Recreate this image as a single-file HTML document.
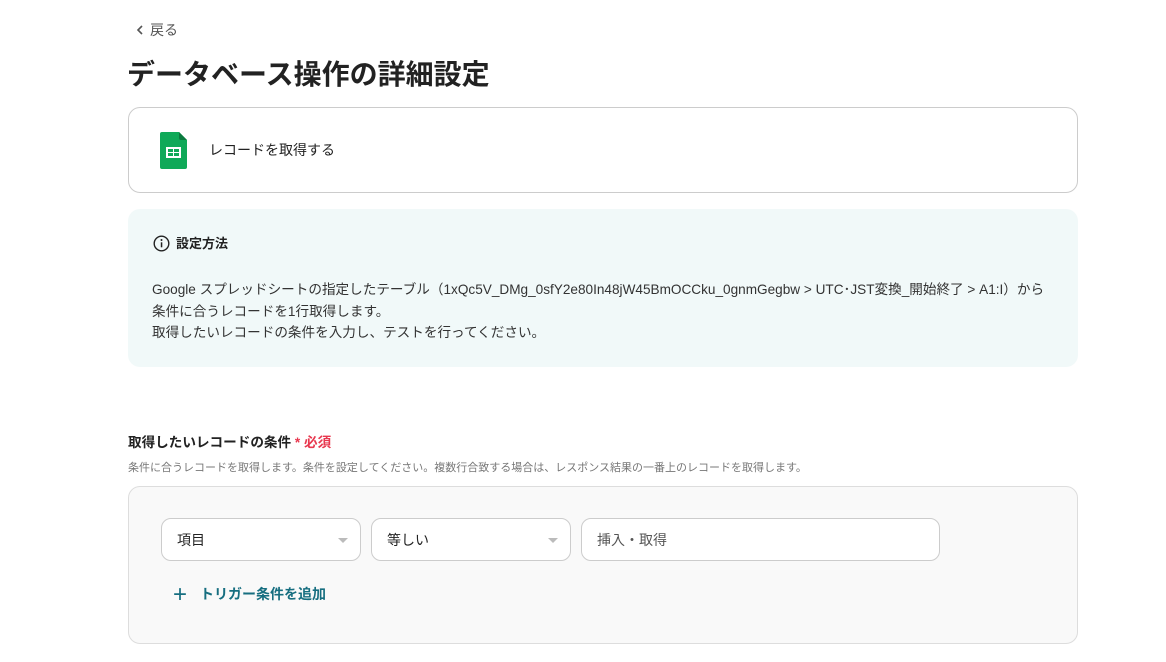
<!DOCTYPE html>
<html><head><meta charset="utf-8"><style>
*{box-sizing:border-box;margin:0;padding:0}
body{width:1166px;height:662px;overflow:hidden;background:#fff;font-family:"Liberation Sans","Noto Sans CJK JP",sans-serif;color:#222;position:relative}
.a{position:absolute}
.sel{position:absolute;top:518px;height:43px;border:1px solid #ccc;border-radius:10px;background:#fff;font-size:14px;line-height:43px;padding-left:15px;color:#222}
.tri{position:absolute;right:12px;top:19px;width:0;height:0;border-left:5px solid transparent;border-right:5px solid transparent;border-top:5px solid #bbb}
</style></head><body>
<div class="a" style="left:134px;top:20px;font-size:14px;color:#555;line-height:20px"><svg width="12" height="12" viewBox="0 0 12 12" style="vertical-align:-1px;margin-right:4px"><path d="M8 2L4 6l4 4" stroke="#555" stroke-width="1.6" fill="none"/></svg>戻る</div>
<div class="a" style="left:127px;top:55px;font-size:28px;font-weight:bold;line-height:40px;color:#222">データベース操作の詳細設定</div>
<div class="a" style="left:128px;top:107px;width:950px;height:86px;border:1px solid #ccc;border-radius:12px"></div>
<svg class="a" style="left:160px;top:132px" width="27" height="37" viewBox="0 0 27 37"><path d="M2 0h17l8 8v27a2 2 0 0 1-2 2H2a2 2 0 0 1-2-2V2a2 2 0 0 1 2-2z" fill="#0fa958"/><path d="M19 0l8 8h-6a2 2 0 0 1-2-2z" fill="#0b7a3e"/><rect x="6" y="15" width="15" height="11" fill="#fff"/><rect x="8" y="17" width="5" height="3" fill="#0fa958"/><rect x="14" y="17" width="5" height="3" fill="#0fa958"/><rect x="8" y="21" width="5" height="3" fill="#0fa958"/><rect x="14" y="21" width="5" height="3" fill="#0fa958"/></svg>
<div class="a" style="left:209px;top:140px;font-size:14px;line-height:20px">レコードを取得する</div>
<div class="a" style="left:128px;top:209px;width:950px;height:158px;background:#f1f9f9;border-radius:12px"></div>
<svg class="a" style="left:153px;top:235px" width="17" height="17" viewBox="0 0 17 17"><circle cx="8.5" cy="8.5" r="7.3" stroke="#222" stroke-width="1.4" fill="none"/><rect x="7.8" y="7.3" width="1.5" height="5" fill="#222"/><circle cx="8.5" cy="5" r="1" fill="#222"/></svg>
<div class="a" style="left:176px;top:234px;font-size:13px;font-weight:bold;line-height:20px">設定方法</div>
<div class="a" style="left:152px;top:279px;font-size:13.6px;line-height:21.5px;color:#333;white-space:nowrap">Google スプレッドシートの指定したテーブル（1xQc5V_DMg_0sfY2e80In48jW45BmOCCku_0gnmGegbw &gt; UTC･JST変換_開始終了 &gt; A1:I）から<br>条件に合うレコードを1行取得します。<br>取得したいレコードの条件を入力し、テストを行ってください。</div>
<div class="a" style="left:128px;top:433px;font-size:13.6px;font-weight:bold;line-height:20px">取得したいレコードの条件 <span style="color:#e8384f">* 必須</span></div>
<div class="a" style="left:128px;top:460px;font-size:11px;color:#777;line-height:16px;white-space:nowrap">条件に合うレコードを取得します。条件を設定してください。複数行合致する場合は、レスポンス結果の一番上のレコードを取得します。</div>
<div class="a" style="left:128px;top:486px;width:950px;height:158px;background:#f9f9f9;border:1px solid #ddd;border-radius:12px"></div>
<div class="sel" style="left:161px;width:200px">項目<div class="tri"></div></div>
<div class="sel" style="left:371px;width:200px">等しい<div class="tri"></div></div>
<div class="sel" style="left:581px;width:359px;color:#555">挿入・取得</div>
<div class="a" style="left:173px;top:584px;font-size:14px;font-weight:bold;color:#166e80;line-height:20px"><span style="font-size:24px;font-weight:normal;vertical-align:-3px;margin-right:13px">+</span>トリガー条件を追加</div>
</body></html>
